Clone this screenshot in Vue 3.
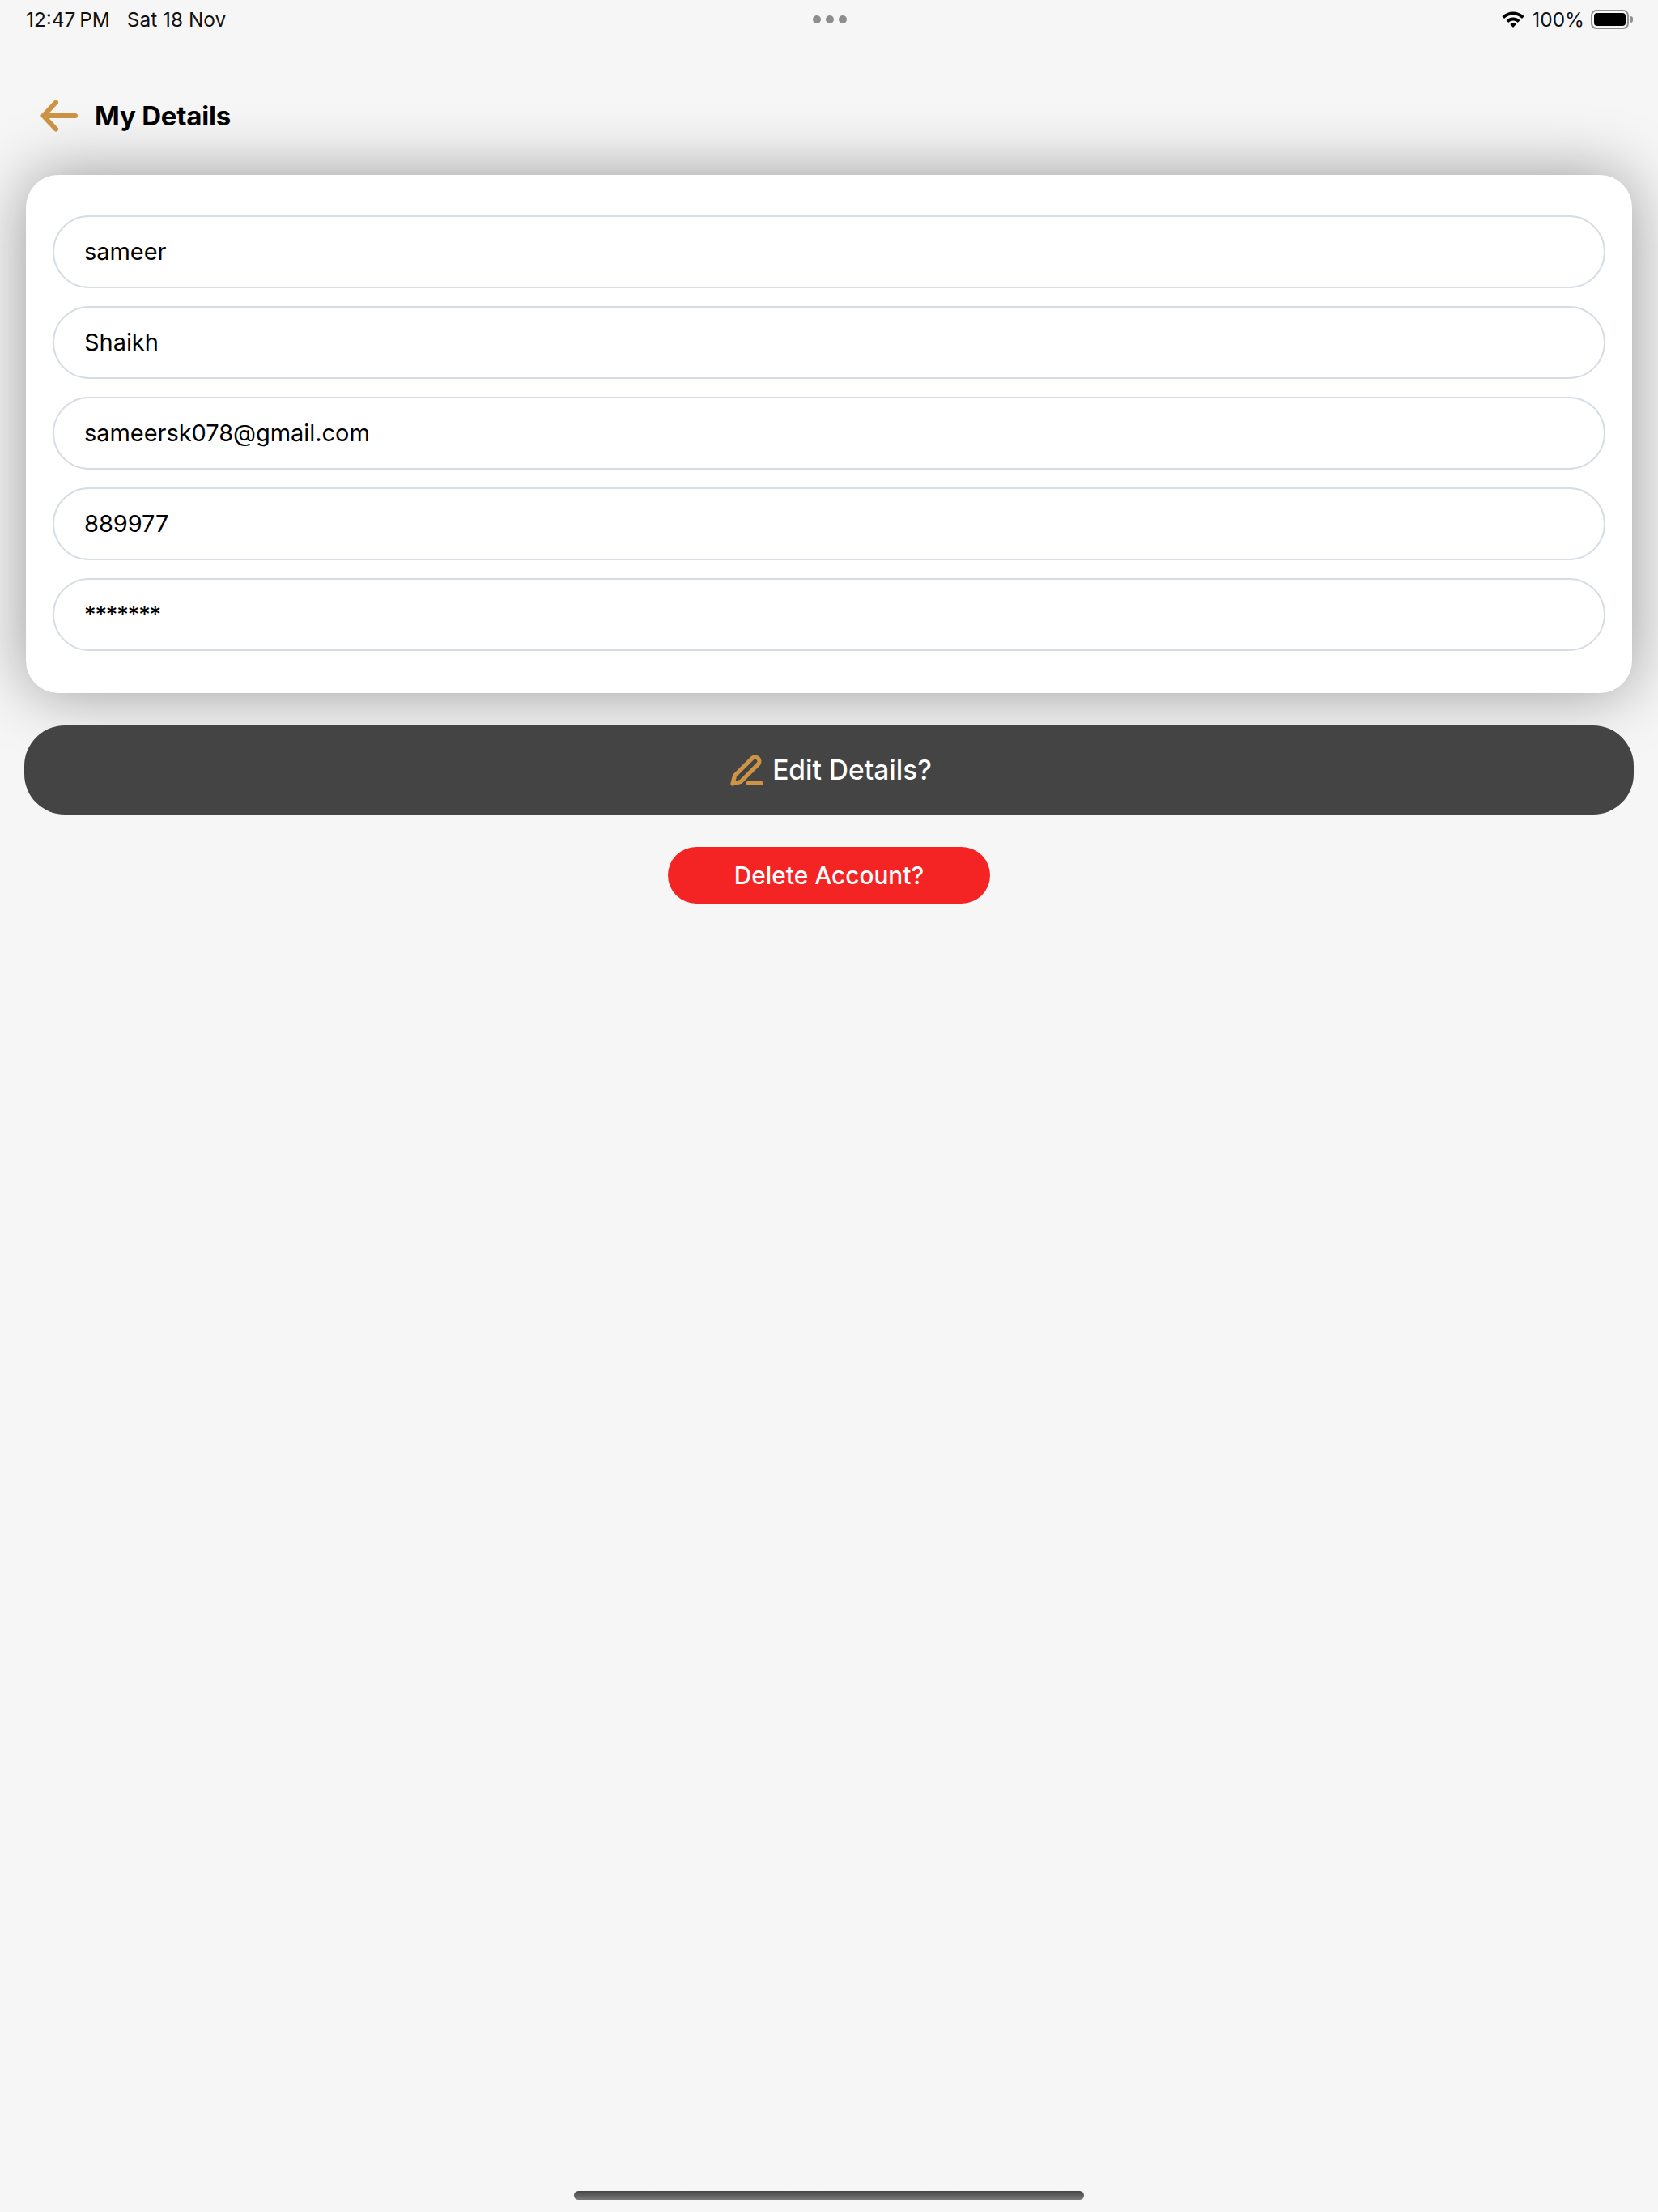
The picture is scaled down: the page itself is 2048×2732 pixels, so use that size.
<script setup>
const fields = ['sameer', 'Shaikh', 'sameersk078@gmail.com', '889977', '*******']
</script>

<template>
  <div class="page">
    <header class="status">
      <div class="status-left">
        <span class="time">12:47 PM</span>
        <span>Sat 18 Nov</span>
      </div>
      <div class="dots"><i></i><i></i><i></i></div>
      <div class="status-right">
        <svg class="wifi" width="28" height="20" viewBox="0 0 28 20">
          <path fill="#000" d="M14 0.5c5 0 9.6 2 13.2 5.3.3.3.3.7 0 1l-1.800 1.800c-.3.3-.7.3-1 0C21.600 6 18 4.500 14 4.500S6.400 6 3.600 8.600c-.3.3-.7.3-1 0L.8 6.800c-.3-.3-.3-.7 0-1C4.400 2.500 9 .5 14 .5zM14 7.500c3 0 5.800 1.200 8 3.200.3.300.3.700 0 1l-1.800 1.800c-.3.300-.7.300-1 0-1.400-1.200-3.200-2-5.200-2s-3.800.8-5.200 2c-.3.300-.7.300-1 0L6 11.700c-.3-.3-.3-.7 0-1 2.200-2 5-3.200 8-3.200zM14 14.200c1.300 0 2.500.5 3.300 1.300.3.300.3.700 0 1l-2.800 2.900c-.3.300-.7.300-1 0l-2.800-2.900c-.3-.3-.3-.7 0-1 .8-.8 2-1.300 3.300-1.300z"/>
        </svg>
        <span class="pct">100%</span>
        <div class="battery"><div class="battery-fill"></div></div>
      </div>
    </header>

    <div class="title-row">
      <svg class="back" width="46" height="40" viewBox="0 0 46 40" fill="none" stroke="#cd9445" stroke-width="6" stroke-linecap="round" stroke-linejoin="round">
        <path d="M43 20H3.500M19 3.500 3.500 20 19 36.500"/>
      </svg>
      <h1>My Details</h1>
    </div>

    <section class="card">
      <div v-for="f in fields" :key="f" class="field" :class="{ masked: f.startsWith('*') }">{{ f }}</div>
    </section>

    <button class="edit">
      <svg width="40" height="40" viewBox="0 0 40 40" fill="none" stroke="#cd9445" stroke-width="5.200" stroke-linecap="round" stroke-linejoin="round">
        <path d="M3 37 5.500 27 27.300 5.300A5.250 5.250 0 0 1 34.700 12.700L13 34.500Z"/>
        <path d="M22 36.500h16"/>
      </svg>
      <span>Edit Details?</span>
    </button>

    <button class="delete">Delete Account?</button>

    <div class="spacer"></div>
    <div class="home"></div>
  </div>
</template>

<style>
html, body { margin: 0; background: #f6f6f6; }
</style>

<style scoped>
.page {
  width: 2048px;
  height: 2732px;
  background: #f6f6f6;
  display: flex;
  flex-direction: column;
  font-family: Inter, "Liberation Sans", sans-serif;
  color: #000;
  overflow: hidden;
}
.status {
  height: 48px;
  padding: 0 30px 0 32px;
  display: flex;
  align-items: center;
  justify-content: space-between;
  font-size: 24.4px;
  color: #111;
}
.status-left { width: 400px; display: flex; gap: 21px; }
.time { word-spacing: -2px; }
.dots { display: flex; gap: 6px; }
.dots i { width: 10px; height: 10px; border-radius: 50%; background: #8e8e8e; }
.status-right { width: 400px; display: flex; align-items: center; justify-content: flex-end; }
.wifi { margin-right: 9px; }
.pct { margin-right: 8px; }
.battery {
  position: relative;
  width: 47px;
  height: 24px;
  box-sizing: border-box;
  border: 2px solid #8f8f8f;
  border-radius: 7px;
  padding: 2px;
  margin-right: 6px;
}
.battery::after {
  content: "";
  position: absolute;
  right: -7px;
  top: 6px;
  width: 3px;
  height: 8px;
  background: #8f8f8f;
  border-radius: 0 3px 3px 0;
}
.battery-fill { width: 100%; height: 100%; background: #000; border-radius: 4px; }

.title-row {
  height: 40px;
  margin-top: 75px;
  padding-left: 50px;
  display: flex;
  align-items: center;
  gap: 21px;
}
.title-row h1 { margin: 0; font-size: 33px; font-weight: 700; line-height: 40px; letter-spacing: -0.2px; }

.card {
  margin: 53px 32px 0;
  height: 640px;
  box-sizing: border-box;
  padding: 50px 33px 0;
  background: #fff;
  border-radius: 40px;
  box-shadow: 0 0 80px rgba(0, 0, 0, 0.38);
  display: flex;
  flex-direction: column;
  gap: 22px;
  position: relative;
}
.field {
  height: 90px;
  box-sizing: border-box;
  border: 2px solid #d6dde4;
  border-radius: 45px;
  padding: 0 0 2px 37px;
  display: flex;
  align-items: center;
  font-size: 29px;
  letter-spacing: -0.05px;
  color: #000;
}
.masked { letter-spacing: -1.100px; }
.edit {
  position: relative;
  margin: 40px 30px 0;
  height: 110px;
  border: 0;
  border-radius: 50px;
  background: #444;
  color: #fff;
  font: 500 33.500px Inter, "Liberation Sans", sans-serif;
  display: flex;
  align-items: center;
  justify-content: center;
  gap: 12px;
  padding: 0 0 0 5px;
}
.delete {
  margin: 40px auto 0;
  width: 398px;
  height: 70px;
  border: 0;
  border-radius: 35px;
  background: #f42424;
  color: #fff;
  font: 500 29.800px Inter, "Liberation Sans", sans-serif;
  padding: 0;
}
.spacer { flex: 1; }
.home {
  width: 630px;
  height: 11px;
  margin: 0 auto 15px;
  border-radius: 6px;
  background: linear-gradient(#454545, #7a7a7a);
}
</style>
